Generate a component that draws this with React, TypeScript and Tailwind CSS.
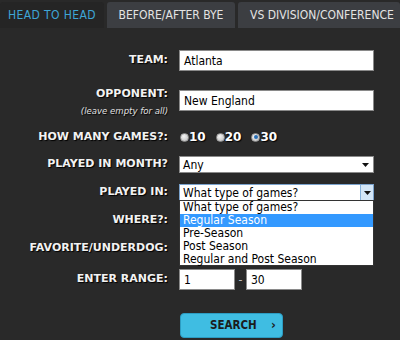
import React from "react";

const font = "font-['Tahoma','DejaVu_Sans_Condensed','Liberation_Sans',sans-serif]";
const wide = "font-['Verdana','DejaVu_Sans','Liberation_Sans',sans-serif]";
const shadow = "[text-shadow:1px_1px_1px_#000]";

function Label({ children }: { children: React.ReactNode }) {
  return (
    <div className={`w-[168px] shrink-0 text-right text-[11px] font-bold text-[#f2f2f2] ${wide} ${shadow}`}>{children}</div>
  );
}

function Arrow() {
  return (
    <svg width="7" height="4" viewBox="0 0 7 4" className="block">
      <path d="M0 0h7L3.5 4z" fill="#111" />
    </svg>
  );
}

function Radio({ checked, label }: { checked?: boolean; label: string }) {
  return (
    <div className="flex items-center">
      <span className="w-[9px] h-[9px] rounded-full bg-[radial-gradient(circle_at_40%_35%,#f4f4f4,#b9b9b9)] border border-[#9a9a9a] flex items-center justify-center">
        {checked && <span className="w-[4px] h-[4px] rounded-full bg-[#2a6fb5]" />}
      </span>
      <span className={`text-[12px] font-bold text-white ${wide} ${shadow}`}>{label}</span>
    </div>
  );
}

export default function App() {
  return (
    <div className={`w-[400px] h-[340px] bg-[#292929] overflow-hidden ${font}`}>
      <div className="flex pt-[2px] h-[28px] gap-[3px]">
        <div className="w-[104px] bg-[#252525] rounded-t-[3px] flex items-center justify-center text-[12px] tracking-[0.4px] text-[#3ea6d6]">
          HEAD TO HEAD
        </div>
        <div className="w-[128px] bg-[#3c3e42] rounded-t-[3px] flex items-center justify-center text-[12px] text-[#e4e4e4]">
          BEFORE/AFTER BYE
        </div>
        <div className="flex-1 bg-[#3c3e42] rounded-t-[3px] flex items-center pl-[12px] text-[12px] text-[#e4e4e4] whitespace-nowrap">
          VS DIVISION/CONFERENCE
        </div>
      </div>

      <div className="flex flex-col pt-[22px]">
        {/* TEAM */}
        <div className="flex items-center h-[21px]">
          <Label>TEAM:</Label>
          <div className="ml-[11px] w-[195px] h-[21px] bg-white border border-[#8a8a8a] flex items-center pl-[4px] text-[12px] text-black">
            Atlanta
          </div>
        </div>
        {/* OPPONENT */}
        <div className="flex items-start h-[21px] mt-[19px]">
          <div className="w-[168px] shrink-0 text-right -mt-[3px]">
            <div className={`text-[11px] leading-[13px] font-bold text-[#f2f2f2] ${wide} ${shadow}`}>OPPONENT:</div>
            <div className={`mt-[5px] text-[9.5px] leading-[11px] italic text-[#e0e0e0] ${shadow}`}>(leave empty for all)</div>
          </div>
          <div className="ml-[11px] w-[195px] h-[21px] bg-white border border-[#8a8a8a] flex items-center pl-[4px] text-[12px] text-black">
            New England
          </div>
        </div>
        {/* HOW MANY */}
        <div className="flex items-center h-[14px] mt-[19px]">
          <Label>HOW MANY GAMES?:</Label>
          <div className="ml-[12px] flex items-center gap-[10px]">
            <Radio label="10" />
            <Radio label="20" />
            <Radio checked label="30" />
          </div>
        </div>
        {/* MONTH */}
        <div className="flex items-center h-[17px] mt-[12px]">
          <Label>PLAYED IN MONTH?</Label>
          <div className="ml-[11px] w-[195px] h-[17px] bg-white border border-[#8a8a8a] flex items-center justify-between pl-[3px] pr-[4px] text-[12px] text-black">
            <span>Any</span>
            <Arrow />
          </div>
        </div>
        {/* PLAYED IN */}
        <div className="flex items-center h-[17px] mt-[11px] relative z-10">
          <Label>PLAYED IN:</Label>
          <div className="ml-[11px] w-[195px] h-[17px] bg-white border border-[#7aa2cc] flex items-center pl-[3px] text-[12px] text-black relative">
            <span className="flex-1">What type of games?</span>
            <span className="w-[13px] h-[15px] bg-[#d3e6f7] border-l border-[#86b2dc] flex items-center justify-center">
              <Arrow />
            </span>
            <div className="absolute left-[-1px] top-[15px] w-[195px] h-[66px] bg-white border border-[#333] text-[12px] leading-[13px] text-black">
              <div className="pl-[3px]">What type of games?</div>
              <div className="pl-[3px] bg-[#3399ff] text-white">Regular Season</div>
              <div className="pl-[3px]">Pre-Season</div>
              <div className="pl-[3px]">Post Season</div>
              <div className="pl-[3px]">Regular and Post Season</div>
            </div>
          </div>
        </div>
        {/* WHERE */}
        <div className="flex items-center h-[17px] mt-[11px]">
          <Label>WHERE?:</Label>
        </div>
        {/* FAVORITE */}
        <div className="flex items-center h-[17px] mt-[11px]">
          <Label>FAVORITE/UNDERDOG:</Label>
        </div>
        {/* RANGE */}
        <div className="flex items-center h-[21px] mt-[12px]">
          <Label>ENTER RANGE:</Label>
          <div className="ml-[11px] w-[56px] h-[21px] bg-white border border-[#8a8a8a] flex items-center pl-[4px] text-[12px] text-black">
            1
          </div>
          <span className="w-[11px] text-center text-[12px] text-[#bdbdbd]">-</span>
          <div className="w-[56px] h-[21px] bg-white border border-[#8a8a8a] flex items-center pl-[4px] text-[12px] text-black">
            30
          </div>
        </div>
        {/* SEARCH */}
        <div className="flex h-[25px] mt-[23px]">
          <div className="ml-[180px] w-[103px] h-[25px] rounded-[4px] bg-[#3fbde2] border border-[#2c9cc2] flex items-center relative">
            <span className="absolute left-[29px] text-[11.5px] font-bold text-[#1c1c1c]">SEARCH</span>
            <span className="absolute left-[90px] text-[13px] font-bold text-[#1c1c1c] leading-none -mt-[2px]">›</span>
          </div>
        </div>
      </div>
    </div>
  );
}
